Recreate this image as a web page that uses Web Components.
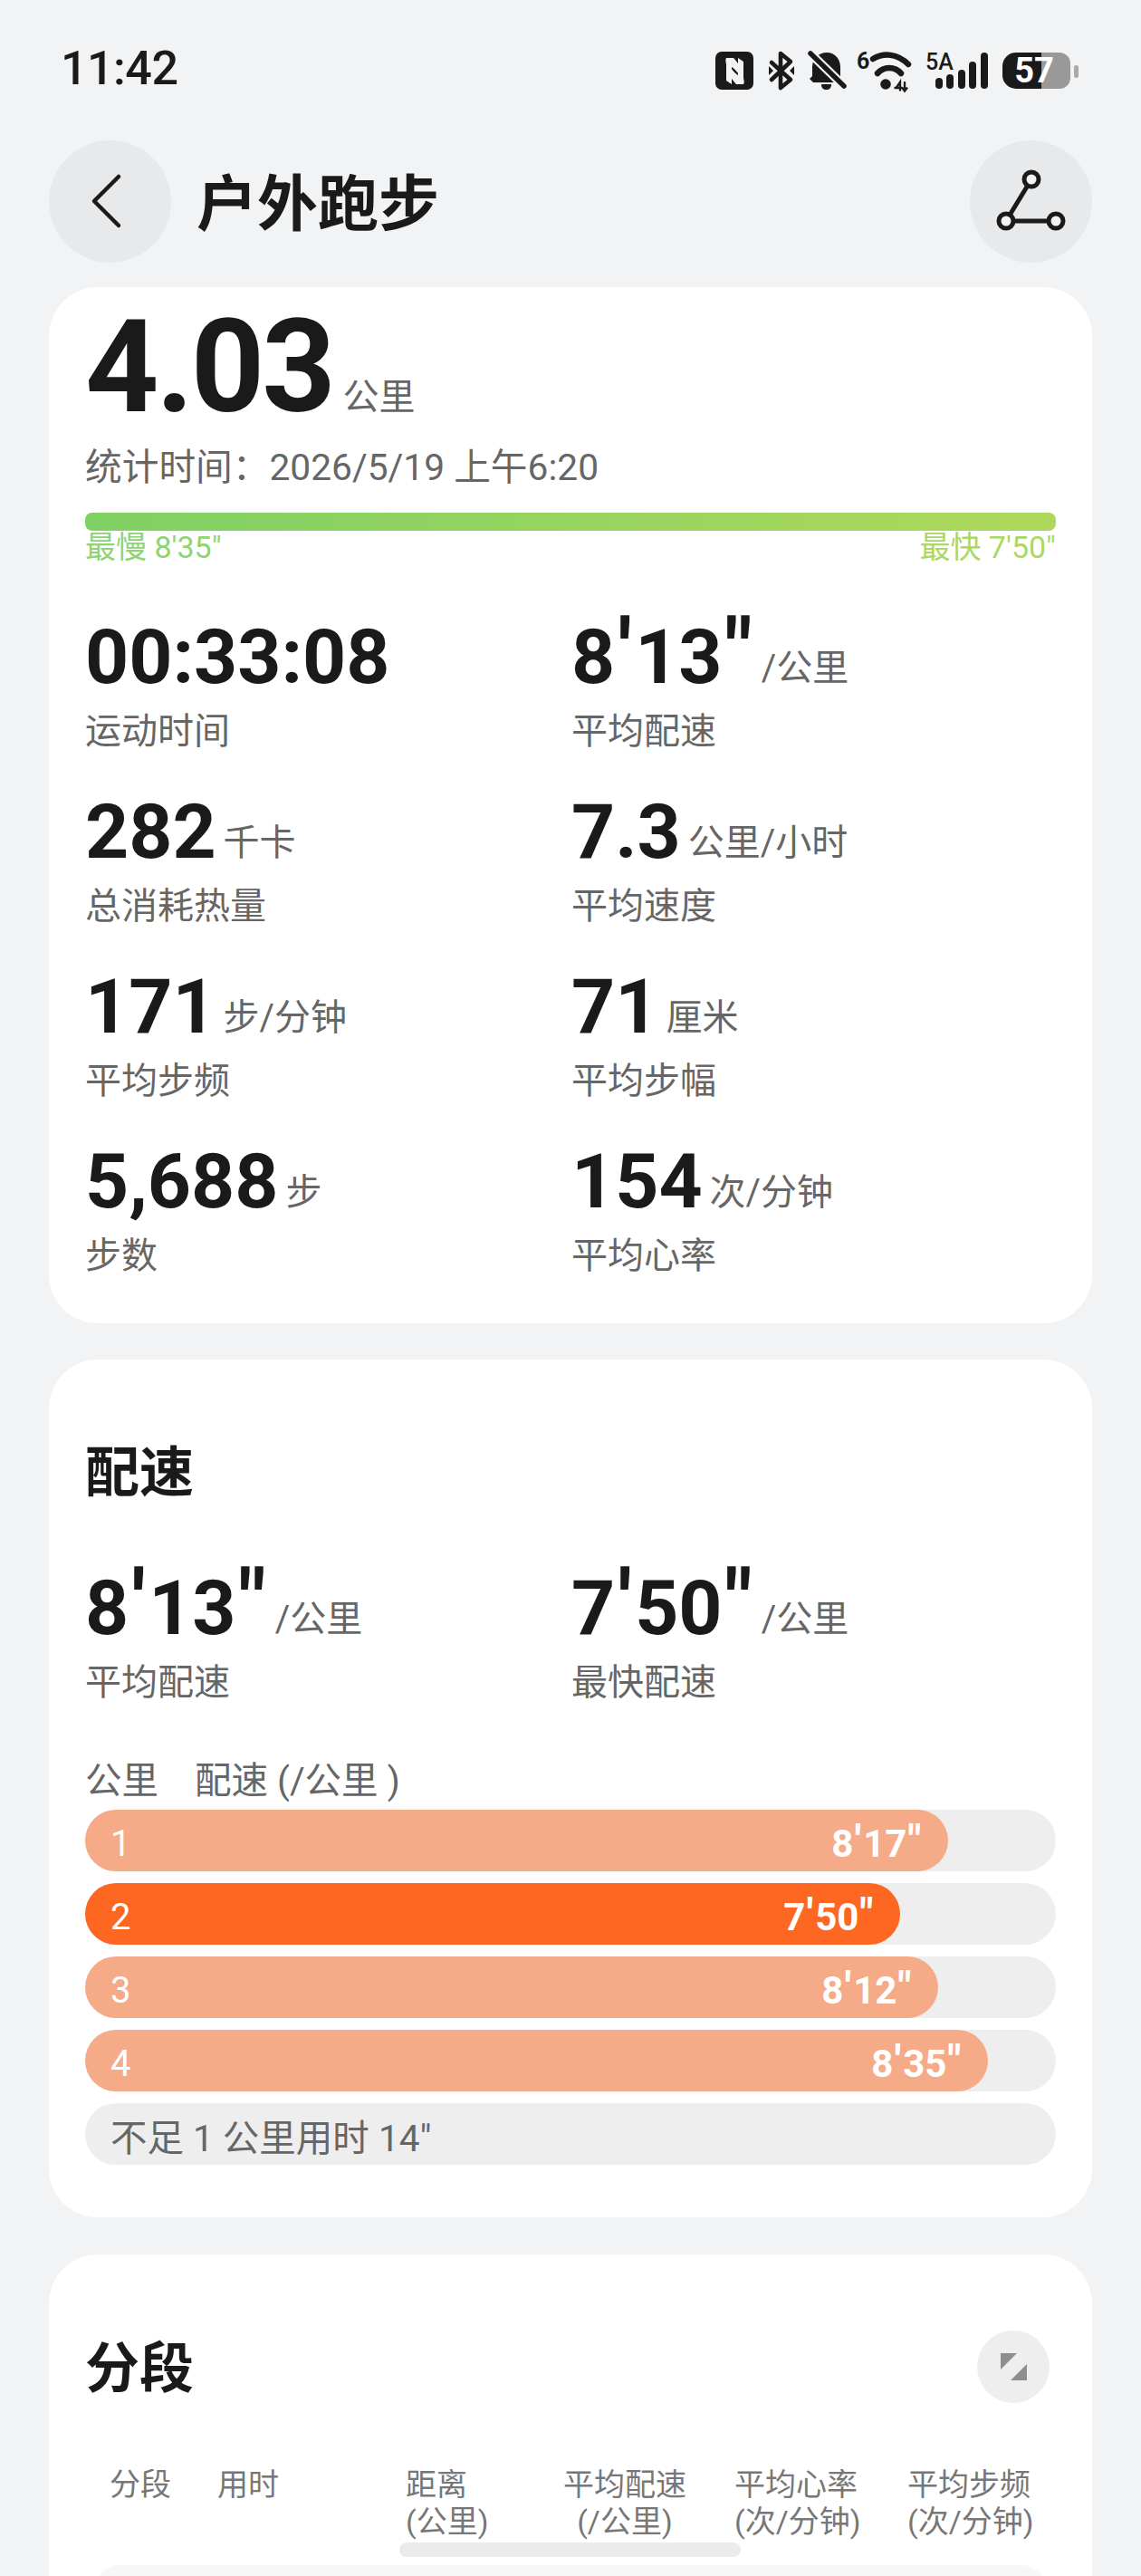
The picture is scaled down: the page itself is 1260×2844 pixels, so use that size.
<!DOCTYPE html>
<html lang="zh">
<head>
<meta charset="utf-8">
<title>户外跑步</title>
<style>
  html, body { margin: 0; height: 2844px; overflow: hidden; }
  body {
    position: relative;
    background: #f2f3f5;
    color: #1a1a1a;
    font-family: Roboto, "Noto Sans CJK SC", sans-serif;
    padding: 0 54px;
    box-sizing: border-box;
    width: 1260px;
  }
  .thumb {
    position: absolute;
    left: 441px;
    top: 2807px;
    width: 377px;
    height: 16px;
    border-radius: 8px;
    background: #ebebeb;
  }
</style>
</head>
<body>
<status-bar></status-bar>
<nav-bar>户外跑步</nav-bar>

<summary-card>
  <metric-item value="00:33:08" label="运动时间"></metric-item>
  <metric-item value="8'13&quot;" unit="/公里" label="平均配速"></metric-item>
  <metric-item value="282" unit="千卡" label="总消耗热量"></metric-item>
  <metric-item value="7.3" unit="公里/小时" label="平均速度"></metric-item>
  <metric-item value="171" unit="步/分钟" label="平均步频"></metric-item>
  <metric-item value="71" unit="厘米" label="平均步幅"></metric-item>
  <metric-item value="5,688" unit="步" label="步数"></metric-item>
  <metric-item value="154" unit="次/分钟" label="平均心率"></metric-item>
</summary-card>

<pace-card>
  <metric-item slot="stats" value="8'13&quot;" unit="/公里" label="平均配速"></metric-item>
  <metric-item slot="stats" value="7'50&quot;" unit="/公里" label="最快配速"></metric-item>
  <pace-bar index="1" pace="8'17&quot;" width="953"></pace-bar>
  <pace-bar index="2" pace="7'50&quot;" width="900" fastest></pace-bar>
  <pace-bar index="3" pace="8'12&quot;" width="942"></pace-bar>
  <pace-bar index="4" pace="8'35&quot;" width="997"></pace-bar>
  <pace-bar note="不足 1 公里用时 14&quot;"></pace-bar>
</pace-card>

<segment-card></segment-card>
<div class="thumb"></div>

<script>
// the primes in the reference's paces are larger than the digits
const primes = s => s.replace(/['"]/g, c => `<span class="p">${c === '"' ? '&quot;' : c}</span>`);
const primeStyle = `.p { display: inline-block; padding: 0 0.05em; transform: scale(1.14); transform-origin: 50% 100%; }`;

class StatusBar extends HTMLElement {
  connectedCallback() {
    this.attachShadow({ mode: 'open' });
    this.shadowRoot.innerHTML = `
      <style>
        :host { display: flex; justify-content: space-between; align-items: flex-start; height: 155px; margin: 0 -54px; padding: 0 68px 0 67px; box-sizing: border-box; color: #1a1a1a; }
        .time { font: 500 52px/50px Roboto, sans-serif; margin-top: 51px; letter-spacing: -0.5px; }
        svg { display: block; margin-top: 52px; overflow: visible; }
        text { font-family: Roboto, sans-serif; }
      </style>
      <div class="time">11:42</div>
      <svg width="402" height="52" viewBox="790 52 402 52">
        <!-- nfc -->
        <rect x="790" y="57" width="42" height="42" rx="7" fill="#1a1a1a"/>
        <g fill="#f2f3f5">
          <path d="M802 64h8c7 7 11 17 12 29-4-9-9-16-14-19v19l-6-4z"/>
          <path d="M802 64h8c7 7 11 17 12 29-4-9-9-16-14-19v19l-6-4z" transform="rotate(180 811.500 78.500)"/>
        </g>
        <!-- bluetooth -->
        <path d="M852 69l21 19-11 9V59l11 9-21 20" fill="none" stroke="#1a1a1a" stroke-width="4.600" stroke-linejoin="round" stroke-linecap="round"/>
        <path d="M849 73l5 5-5 5zM877 73l-5 5 5 5z" fill="#1a1a1a"/>
        <!-- muted bell -->
        <path d="M913 58c9 0 15 7 15 16v12l4 5H898l-4-4 3-3V74c0-9 7-16 16-16z" fill="#1a1a1a"/>
        <path d="M907 93h11c0 4-2 6-5.500 6s-5.500-2-5.500-6z" fill="#1a1a1a"/>
        <path d="M895 59l37 36" stroke="#f2f3f5" stroke-width="10"/>
        <path d="M895 59l37 36" stroke="#1a1a1a" stroke-width="5.500" stroke-linecap="round"/>
        <!-- wifi -->
        <g fill="none" stroke="#1a1a1a" stroke-width="6.500" stroke-linecap="round">
          <path d="M964 65c12-7 27-6 39 6"/>
          <path d="M969 81c7-8 19-8 26 0"/>
        </g>
        <text x="946" y="76" font-size="25" font-weight="700" fill="#1a1a1a">6</text>
        <circle cx="978" cy="93" r="5.800" fill="#1a1a1a"/>
        <path d="M990 96.500l4-6v10M987.500 97h9M999 90v10M996 96.500l3 4 3-4" fill="none" stroke="#1a1a1a" stroke-width="2.300"/>
        <!-- signal -->
        <text x="1022" y="77" font-size="25" font-weight="500" fill="#1a1a1a">5A</text>
        <g fill="none" stroke="#1a1a1a" stroke-width="8" stroke-linecap="round">
          <path d="M1037 90v4"/>
          <path d="M1049 86v8"/>
          <path d="M1062 81v13"/>
          <path d="M1074 72v22"/>
          <path d="M1087 62v32"/>
        </g>
        <!-- battery -->
        <path d="M1150 58h20a12 12 0 0 1 12 12v16a12 12 0 0 1-12 12h-20z" fill="#999"/>
        <path d="M1150 58h-28a15 15 0 0 0-15 15v10a15 15 0 0 0 15 15h28z" fill="#1a1a1a"/>
        <rect x="1186" y="72" width="5" height="14" rx="2.500" fill="#aaa"/>
        <text x="1142" y="91" font-size="38" font-weight="700" fill="#fff" text-anchor="middle">57</text>
      </svg>
    `;
  }
}
customElements.define('status-bar', StatusBar);

class NavBar extends HTMLElement {
  connectedCallback() {
    this.attachShadow({ mode: 'open' });
    this.shadowRoot.innerHTML = `
      <style>
        :host { display: flex; align-items: center; height: 135px; }
        .btn { width: 135px; height: 135px; border-radius: 50%; background: #e8e9eb; display: flex; align-items: center; justify-content: center; flex: none; }
        .title { font: 700 67px/80px "Noto Sans CJK SC", sans-serif; margin-left: 28px; padding-bottom: 6px; flex: 1; color: #1a1a1a; }
      </style>
      <div class="btn">
        <svg width="135" height="135" viewBox="0 0 135 135">
          <path d="M77 40L50 67l27 27" fill="none" stroke="#1a1a1a" stroke-width="4.500" stroke-linecap="round" stroke-linejoin="round"/>
        </svg>
      </div>
      <div class="title"><slot></slot></div>
      <div class="btn">
        <svg width="135" height="135" viewBox="0 0 135 135">
          <path d="M68 43L40 89H95" fill="none" stroke="#1a1a1a" stroke-width="5"/>
          <circle cx="68" cy="43" r="8" fill="#f2f3f5" stroke="#1a1a1a" stroke-width="5"/>
          <circle cx="40" cy="89" r="8" fill="#f2f3f5" stroke="#1a1a1a" stroke-width="5"/>
          <circle cx="95" cy="89" r="8" fill="#f2f3f5" stroke="#1a1a1a" stroke-width="5"/>
        </svg>
      </div>
    `;
  }
}
customElements.define('nav-bar', NavBar);

class MetricItem extends HTMLElement {
  connectedCallback() {
    const unit = this.getAttribute('unit');
    this.attachShadow({ mode: 'open' });
    this.shadowRoot.innerHTML = `
      <style>
        :host { display: block; }
        .row { display: flex; align-items: baseline; height: 80px; line-height: 80px; white-space: nowrap; }
        .value { font: 700 84px/80px Roboto, sans-serif; color: #1a1a1a; }
        ${primeStyle}
        .unit { font: 400 40px/80px Roboto, "Noto Sans CJK SC", sans-serif; color: #666; margin-left: 8px; transform: translateY(-3px); }
        .label { font: 400 40px/50px "Noto Sans CJK SC", sans-serif; color: #666; margin-top: 13px; }
      </style>
      <div class="row">
        <span class="value">${primes(this.getAttribute('value'))}</span>
        ${unit ? `<span class="unit">${unit}</span>` : ''}
      </div>
      <div class="label">${this.getAttribute('label')}</div>
    `;
  }
}
customElements.define('metric-item', MetricItem);

class SummaryCard extends HTMLElement {
  connectedCallback() {
    this.attachShadow({ mode: 'open' });
    this.shadowRoot.innerHTML = `
      <style>
        :host { display: block; margin-top: 27px; background: #fff; border-radius: 54px; padding: 21px 40px 53px; }
        .total { display: flex; align-items: baseline; height: 130px; }
        .total b { font: 700 142px/130px Roboto, sans-serif; color: #1a1a1a; letter-spacing: -3px; margin-top: 3px; }
        .total span { font: 400 40px/50px "Noto Sans CJK SC", sans-serif; color: #666; margin-left: 11px; transform: translateY(-2px); }
        .when { font: 400 40.700px/50px Roboto, "Noto Sans CJK SC", sans-serif; color: #666; margin-top: 23px; }
        .range { height: 20px; margin-top: 25px; border-radius: 8px; background: linear-gradient(90deg, #7fd065, #aed85b); }
        .ends { display: flex; justify-content: space-between; font: 400 34px/36px Roboto, "Noto Sans CJK SC", sans-serif; }
        .slow { color: #8ed470; }
        .fast { color: #aad961; }
        .grid { display: grid; grid-template-columns: 537px 1fr; row-gap: 50px; margin-top: 64px; }
      </style>
      <div class="total"><b>4.03</b><span>公里</span></div>
      <div class="when">统计时间：2026/5/19 上午6:20</div>
      <div class="range"></div>
      <div class="ends"><span class="slow">最慢 8'35"</span><span class="fast">最快 7'50"</span></div>
      <div class="grid"><slot></slot></div>
    `;
  }
}
customElements.define('summary-card', SummaryCard);

class PaceBar extends HTMLElement {
  connectedCallback() {
    const note = this.getAttribute('note');
    const fill = note ? '' : `
      <div class="fill ${this.hasAttribute('fastest') ? 'top' : ''}" style="width:${this.getAttribute('width')}px">
        <span class="num">${this.getAttribute('index')}</span>
        <span class="pace">${primes(this.getAttribute('pace'))}</span>
      </div>`;
    this.attachShadow({ mode: 'open' });
    this.shadowRoot.innerHTML = `
      <style>
        :host { display: block; height: 68px; border-radius: 34px; background: #eeeeee; }
        .fill { height: 100%; border-radius: 34px; background: #f5aa88; color: #fff; display: flex; align-items: center; justify-content: space-between; padding: 8px 28px 0; box-sizing: border-box; }
        .fill.top { background: #fd6721; }
        .num { font: 400 40px/48px Roboto, sans-serif; }
        .pace { font: 700 42px/48px Roboto, sans-serif; }
        ${primeStyle}
        .note { font: 400 40.500px/58px Roboto, "Noto Sans CJK SC", sans-serif; color: #666; padding: 10px 0 0 28px; }
      </style>
      ${fill}
      ${note ? `<div class="note">${note.replace(/"/g, '&quot;')}</div>` : ''}
    `;
  }
}
customElements.define('pace-bar', PaceBar);

class PaceCard extends HTMLElement {
  connectedCallback() {
    this.attachShadow({ mode: 'open' });
    this.shadowRoot.innerHTML = `
      <style>
        :host { display: block; margin-top: 40px; background: #fff; border-radius: 54px; padding: 85px 40px 58px; }
        h2 { font: 700 60px/70px "Noto Sans CJK SC", sans-serif; color: #1a1a1a; margin: 0; }
        .grid { display: grid; grid-template-columns: 537px 1fr; margin-top: 80px; }
        .head { display: flex; gap: 40px; font: 400 40.500px/50px Roboto, "Noto Sans CJK SC", sans-serif; color: #666; margin-top: 62px; }
        .bars { display: grid; row-gap: 13px; margin-top: 7px; }
      </style>
      <h2>配速</h2>
      <div class="grid"><slot name="stats"></slot></div>
      <div class="head"><span>公里</span><span>配速 (/公里 )</span></div>
      <div class="bars"><slot></slot></div>
    `;
  }
}
customElements.define('pace-card', PaceCard);

class SegmentCard extends HTMLElement {
  connectedCallback() {
    this.attachShadow({ mode: 'open' });
    this.shadowRoot.innerHTML = `
      <style>
        :host { display: block; margin-top: 41px; background: #fff; border-radius: 54px 54px 0 0; padding: 89px 40px 0; }
        .top { display: flex; justify-content: space-between; align-items: center; height: 70px; }
        h2 { font: 700 60px/70px "Noto Sans CJK SC", sans-serif; color: #1a1a1a; margin: 0 0 6px; }
        .toggle { width: 80px; height: 80px; border-radius: 50%; background: #eeeeee; margin-right: 7px; display: flex; align-items: center; justify-content: center; }
        .cols { display: grid; grid-template-columns: 119px 208px 174px 189px 191px 1fr; margin: 75px 0 0 27px; font: 400 34px/41px Roboto, "Noto Sans CJK SC", sans-serif; color: #777; }
        .cols span { white-space: pre; }
        .mid { text-align: center; width: 136px; }
        .row { height: 12px; margin: 27px 9px 0; overflow: hidden; }
        .row i { display: block; height: 60px; border-radius: 30px; background: #f7f7f7; }
      </style>
      <div class="top">
        <h2>分段</h2>
        <div class="toggle">
          <svg width="29" height="30" viewBox="0 0 29 30"><path d="M0 0h18L0 18zM29 30H11l18-18z" fill="#8e8e8e"/></svg>
        </div>
      </div>
      <div class="cols">
        <span>分段</span>
        <span>用时</span>
        <span>距离
(公里)</span>
        <span class="mid">平均配速
(/公里)</span>
        <span class="mid">平均心率
(次/分钟)</span>
        <span class="mid">平均步频
(次/分钟)</span>
      </div>
      <div class="row"><i></i></div>
    `;
  }
}
customElements.define('segment-card', SegmentCard);
</script>
</body>
</html>
